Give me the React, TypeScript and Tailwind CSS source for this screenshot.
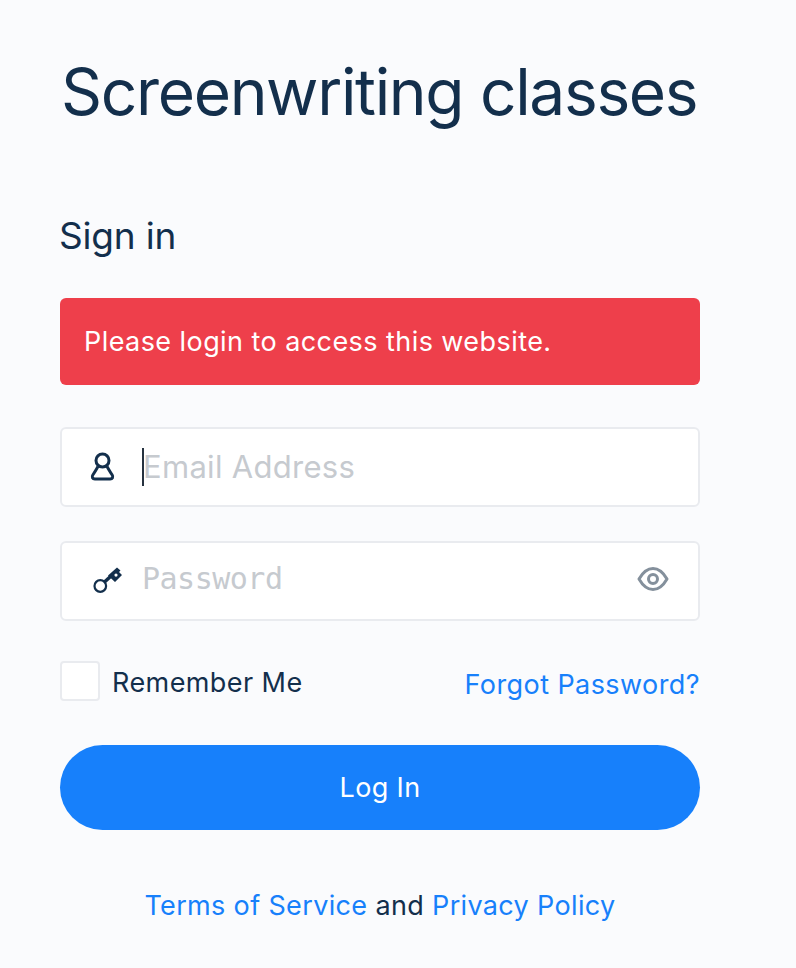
export default function App() {
  return (
    <div className="w-[796px] h-[968px] bg-[#fafbfd] overflow-hidden pl-[60px] pr-[96px] font-['Inter',sans-serif] text-[#132f4c]">
      <h1 className="pt-[53px] h-[215px] ml-[1px] text-[64px] leading-[78px] font-normal whitespace-nowrap tracking-[-1.33px]">Screenwriting classes</h1>
      <h2 className="text-[37px] leading-[44px] h-[75px] -mt-[1px] -ml-[1px] font-normal tracking-[-0.2px]">Sign in</h2>
      <div className="mt-[9px] h-[87px] rounded-[6px] bg-[#ee3f4b] text-white text-[27px] leading-[87px] pl-[24px] tracking-[0.43px]">Please login to access this website.</div>
      <div className="mt-[42px] h-[80px] rounded-[6px] border-2 border-[#e9ebef] bg-white flex items-center">
        <svg className="ml-[28px] w-[28px] h-[30px]" viewBox="0 0 28 30" fill="none" stroke="#132f4c" strokeWidth="3">
          <circle cx="12.500" cy="8.500" r="6.500" />
          <path d="M8 14.500C6.500 17 4.500 20.500 2.800 23c-1.300 2-.2 4 2 4h15.400c2.200 0 3.300-2 2-4-1.700-2.500-3.700-6-5.200-8.500" strokeLinejoin="round" />
        </svg>
        <div className="ml-[24px] flex items-center h-[38px]">
          <div className="w-[2px] h-[38px] bg-[#26323f]" />
          <span className="-ml-[1px] text-[31px] text-[#c6cacf] tracking-[0.3px] leading-[38px]">Email Address</span>
        </div>
      </div>
      <div className="mt-[34px] h-[80px] rounded-[6px] border-2 border-[#e9ebef] bg-white flex items-center">
        <svg className="ml-[30px] w-[32px] h-[30px] mt-[1px]" viewBox="0 0 32 30" fill="none" stroke="#132f4c">
          <circle cx="8.300" cy="19" r="5.800" strokeWidth="2.200" />
          <path d="M12.500 15 18.500 9.500" strokeWidth="3.500" />
          <path fillRule="evenodd" stroke="none" fill="#132f4c" d="M16 8.500 25 .5 28.500 3.500l-1.500 1.500 3 3L23 15ZM24 6.500a1.600 1.600 0 1 0 0 3.200 1.600 1.600 0 0 0 0-3.200Z" />
        </svg>
        <span className="ml-[18px] text-[30px] text-[#c6cacf] font-['DejaVu_Sans_Mono',monospace] tracking-[-0.5px] leading-[38px] -mt-[4px]">Password</span>
        <svg className="ml-auto mr-[28px] w-[34px] h-[28px] -mt-[4px]" viewBox="0 0 34 28" fill="none" stroke="#84909c" strokeWidth="3">
          <path d="M3 14C7 7 11.500 3.500 17 3.500S27 7 31 14c-4 7-8.500 10.500-14 10.500S7 21 3 14Z" strokeLinejoin="round" />
          <circle cx="17" cy="14" r="4.500" />
        </svg>
      </div>
      <div className="mt-[40px] h-[42px] flex items-center">
        <div className="w-[40px] h-[40px] mb-[2px] rounded-[4px] border-2 border-[#e9ebef] bg-white" />
        <span className="ml-[12px] mt-[2px] text-[27px] tracking-[0.42px]">Remember Me</span>
        <a className="ml-auto mt-[6px] text-[27px] text-[#1780fb] tracking-[0.42px]">Forgot Password?</a>
      </div>
      <button className="mt-[42px] pt-[2px] block w-full h-[85px] rounded-full bg-[#1780fb] text-white text-[27px] tracking-[0.35px]">Log In</button>
      <p className="mt-[54px] text-center text-[27px] leading-[44px] tracking-[0.35px] text-[#132f4c]">
        <a className="text-[#1780fb]">Terms of Service</a> and <a className="text-[#1780fb]">Privacy Policy</a>
      </p>
    </div>
  );
}
